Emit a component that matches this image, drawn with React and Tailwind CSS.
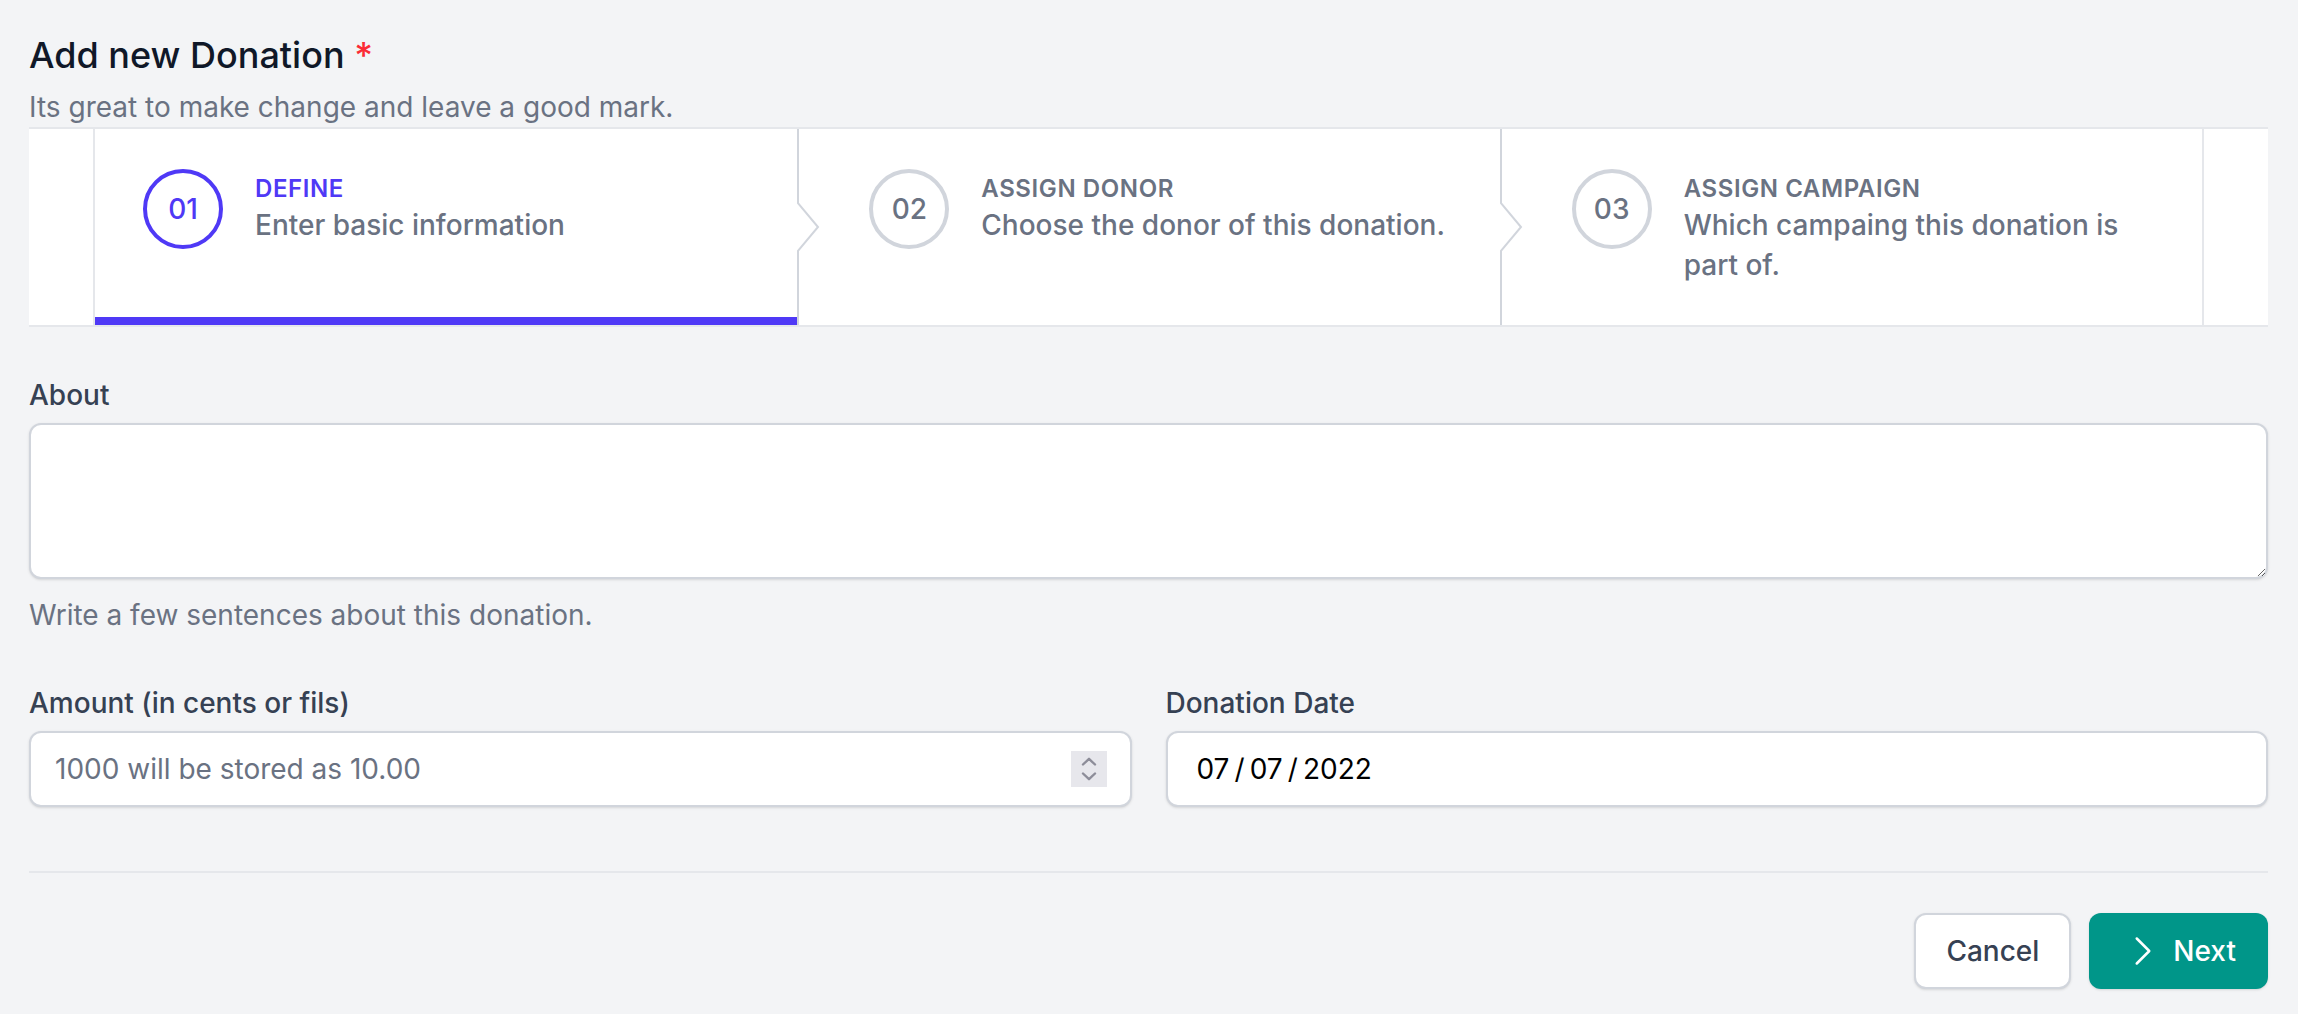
import React from 'react';

const steps = [
  { id: '01', name: 'Define', description: 'Enter basic information', status: 'current' },
  { id: '02', name: 'Assign Donor', description: 'Choose the donor of this donation.', status: 'upcoming' },
  { id: '03', name: 'Assign Campaign', description: 'Which campaing this donation is part of.', status: 'upcoming' },
];

const StepSeparator = () => (
  <div className="absolute inset-y-0 left-0 w-6" aria-hidden="true">
    <svg className="h-full w-full text-gray-300" viewBox="0 0 12 82" fill="none" preserveAspectRatio="none">
      <path d="M0.5 0V31L10.5 41L0.5 51V82" stroke="currentColor" strokeWidth="2" vectorEffect="non-scaling-stroke" />
    </svg>
  </div>
);

const NumberSpinner = () => (
  <div className="pointer-events-none absolute right-[25px] top-1/2 flex h-[36px] w-[36px] -translate-y-1/2 flex-col items-center justify-center gap-[6px] bg-[#e7e7ec]">
    <svg width="16" height="9" viewBox="0 0 16 9" fill="none">
      <path d="M2 7.5L8 1.8L14 7.5" stroke="#8d8d99" strokeWidth="2.4" strokeLinecap="round" strokeLinejoin="round" />
    </svg>
    <svg width="16" height="9" viewBox="0 0 16 9" fill="none">
      <path d="M2 1.5L8 7.2L14 1.5" stroke="#8d8d99" strokeWidth="2.4" strokeLinecap="round" strokeLinejoin="round" />
    </svg>
  </div>
);

const App = () => {
  return (
    <div className="min-h-screen bg-gray-100 pb-6 pl-[29px] pr-[30px] pt-[27px] font-['Inter',sans-serif]">
      <h3 className="text-[36px] font-medium leading-[56px] text-gray-900">
        Add new Donation <span className="text-red-500">*</span>
      </h3>
      <p className="mt-[4px] text-[28px] leading-[40px] text-gray-500">Its great to make change and leave a good mark.</p>

      <div className="border-y-2 border-gray-200 bg-white px-16">
        <nav aria-label="Progress">
          <ol className="flex border-x-2 border-gray-200">
            {steps.map((step, idx) => {
              const current = step.status === 'current';
              return (
                <li key={step.id} className="relative min-w-0 flex-1 overflow-hidden">
                  {current ? <span className="absolute inset-x-0 bottom-0 h-2 bg-indigo-600" aria-hidden="true" /> : null}
                  <div className={`flex items-start py-10 pr-12 ${idx !== 0 ? 'pl-[72px]' : 'pl-12'}`}>
                    <span className="shrink-0">
                      <span
                        className={`flex h-20 w-20 items-center justify-center rounded-full border-4 ${current ? 'border-indigo-600' : 'border-gray-300'}`}
                      >
                        <span className={`text-[28px] font-medium ${current ? 'text-indigo-600' : 'text-gray-500'}`}>{step.id}</span>
                      </span>
                    </span>
                    <span className="ml-8 mt-1 flex min-w-0 flex-col">
                      <span
                        className={`text-[24px] font-semibold uppercase leading-[32px] tracking-wide ${current ? 'text-indigo-600' : 'text-gray-500'}`}
                      >
                        {step.name}
                      </span>
                      <span className="text-[28px] font-medium leading-[40px] text-gray-500">{step.description}</span>
                    </span>
                  </div>
                  {idx !== 0 ? <StepSeparator /> : null}
                </li>
              );
            })}
          </ol>
        </nav>
      </div>

      <form className="mt-12">
        <div>
          <label htmlFor="about" className="block text-[28px] font-medium leading-[40px] text-gray-700">
            About
          </label>
          <textarea
            id="about"
            rows={3}
            className="mt-2 block h-[156px] w-full rounded-xl border-2 border-gray-300 bg-white px-6 py-4 text-[28px] shadow-sm outline-none"
          />
          <p className="mt-4 text-[28px] leading-[40px] text-gray-500">Write a few sentences about this donation.</p>
        </div>

        <div className="mt-12 grid grid-cols-2 gap-x-[34px]">
          <div>
            <label htmlFor="amount" className="block text-[28px] font-medium leading-[40px] text-gray-700">
              Amount (in cents or fils)
            </label>
            <div className="relative mt-2">
              <input
                id="amount"
                type="text"
                placeholder="1000 will be stored as 10.00"
                className="block h-[76px] w-full rounded-xl border-2 border-gray-300 bg-white px-6 text-[28px] text-gray-900 shadow-sm outline-none placeholder:text-gray-500"
              />
              <NumberSpinner />
            </div>
          </div>
          <div>
            <label htmlFor="donation-date" className="block text-[28px] font-medium leading-[40px] text-gray-700">
              Donation Date
            </label>
            <input
              id="donation-date"
              type="text"
              defaultValue={'07\u2009/\u200907\u2009/\u20092022'}
              className="mt-2 block h-[76px] w-full rounded-xl border-2 border-gray-300 bg-white pl-[29px] pr-6 text-[28px] text-black shadow-sm outline-none"
            />
          </div>
        </div>

        <div className="mt-16 border-t-2 border-gray-200 pt-10">
          <div className="flex justify-end gap-[18px]">
            <button
              type="button"
              className="h-[76px] rounded-xl border-2 border-gray-300 bg-white px-[30px] text-[28px] font-medium text-gray-700 shadow-sm"
            >
              Cancel
            </button>
            <button
              type="submit"
              className="flex h-[76px] items-center rounded-xl border-2 border-transparent bg-teal-600 pl-8 pr-[30px] text-[28px] font-medium text-white shadow-sm"
            >
              <svg className="mr-[10px] h-10 w-10" viewBox="0 0 24 24" fill="none" stroke="currentColor" strokeWidth="1.5" aria-hidden="true">
                <path strokeLinecap="round" strokeLinejoin="round" d="M8.25 4.5l7.5 7.5-7.5 7.5" />
              </svg>
              Next
            </button>
          </div>
        </div>
      </form>
    </div>
  );
};

export default App;
